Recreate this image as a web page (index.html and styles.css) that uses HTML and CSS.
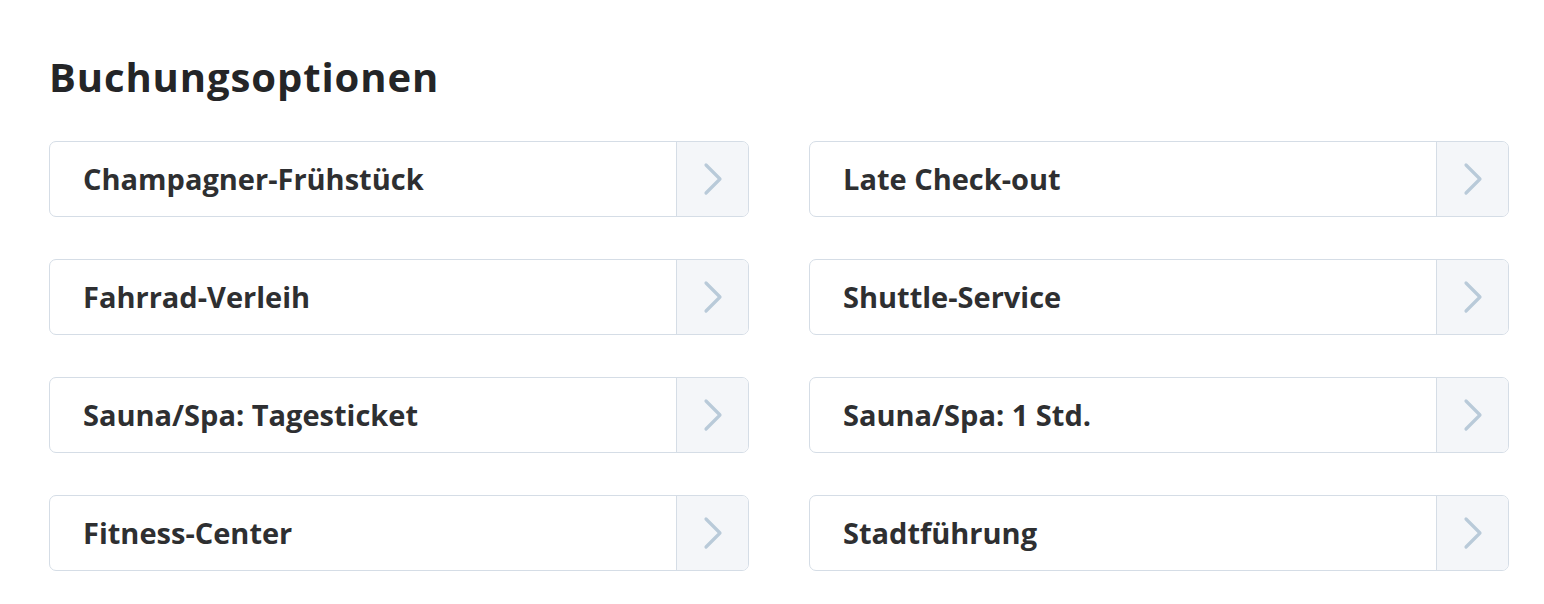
FILE: index.html
```html
<!DOCTYPE html>
<html lang="de">
<head>
<meta charset="utf-8">
<title>Buchungsoptionen</title>
<link rel="stylesheet" href="styles.css">
</head>
<body>
<main class="page">
  <h1 class="title">Buchungsoptionen</h1>
  <div class="grid">
    <a class="option" href="#"><span class="label">Champagner-Frühstück</span><span class="arrow"><svg viewBox="0 0 20 34" width="20" height="34"><path d="M3 3 L17 17 L3 31" fill="none" stroke="#b9cad9" stroke-width="3.2" stroke-linecap="round" stroke-linejoin="round"/></svg></span></a>
    <a class="option" href="#"><span class="label">Late Check-out</span><span class="arrow"><svg viewBox="0 0 20 34" width="20" height="34"><path d="M3 3 L17 17 L3 31" fill="none" stroke="#b9cad9" stroke-width="3.2" stroke-linecap="round" stroke-linejoin="round"/></svg></span></a>
    <a class="option" href="#"><span class="label">Fahrrad-Verleih</span><span class="arrow"><svg viewBox="0 0 20 34" width="20" height="34"><path d="M3 3 L17 17 L3 31" fill="none" stroke="#b9cad9" stroke-width="3.2" stroke-linecap="round" stroke-linejoin="round"/></svg></span></a>
    <a class="option" href="#"><span class="label">Shuttle-Service</span><span class="arrow"><svg viewBox="0 0 20 34" width="20" height="34"><path d="M3 3 L17 17 L3 31" fill="none" stroke="#b9cad9" stroke-width="3.2" stroke-linecap="round" stroke-linejoin="round"/></svg></span></a>
    <a class="option" href="#"><span class="label">Sauna/Spa: Tagesticket</span><span class="arrow"><svg viewBox="0 0 20 34" width="20" height="34"><path d="M3 3 L17 17 L3 31" fill="none" stroke="#b9cad9" stroke-width="3.2" stroke-linecap="round" stroke-linejoin="round"/></svg></span></a>
    <a class="option" href="#"><span class="label">Sauna/Spa: 1 Std.</span><span class="arrow"><svg viewBox="0 0 20 34" width="20" height="34"><path d="M3 3 L17 17 L3 31" fill="none" stroke="#b9cad9" stroke-width="3.2" stroke-linecap="round" stroke-linejoin="round"/></svg></span></a>
    <a class="option" href="#"><span class="label">Fitness-Center</span><span class="arrow"><svg viewBox="0 0 20 34" width="20" height="34"><path d="M3 3 L17 17 L3 31" fill="none" stroke="#b9cad9" stroke-width="3.2" stroke-linecap="round" stroke-linejoin="round"/></svg></span></a>
    <a class="option" href="#"><span class="label">Stadtführung</span><span class="arrow"><svg viewBox="0 0 20 34" width="20" height="34"><path d="M3 3 L17 17 L3 31" fill="none" stroke="#b9cad9" stroke-width="3.2" stroke-linecap="round" stroke-linejoin="round"/></svg></span></a>
  </div>
</main>
</body>
</html>
```

FILE: styles.css
```css
* { box-sizing: border-box; }
html, body { margin: 0; padding: 0; background: #ffffff; }
body {
  font-family: "Open Sans", Lato, "Liberation Sans", sans-serif;
  color: #2b2c2e;
}
.page {
  padding: 50px 35px 0 49px;
}
.title {
  margin: 0;
  font-size: 40px;
  line-height: 54px;
  font-weight: 700;
  color: #242527;
  letter-spacing: 0.9px;
}
.grid {
  margin-top: 37px;
  display: grid;
  grid-template-columns: 700px 700px;
  column-gap: 60px;
  row-gap: 42px;
}
.option {
  display: flex;
  height: 76px;
  border: 1.5px solid #d5dde6;
  border-radius: 7px;
  text-decoration: none;
  color: #2e2f31;
  overflow: hidden;
  background: #fff;
}
.label {
  flex: 1;
  display: flex;
  align-items: center;
  padding-left: 33px;
  padding-bottom: 2px;
  font-size: 29px;
  font-weight: 700;
}
.arrow {
  width: 72px;
  display: flex;
  align-items: center;
  justify-content: center;
  background: #f4f6f9;
  border-left: 1.5px solid #d5dde6;
}
.arrow svg { display: block; }
```
